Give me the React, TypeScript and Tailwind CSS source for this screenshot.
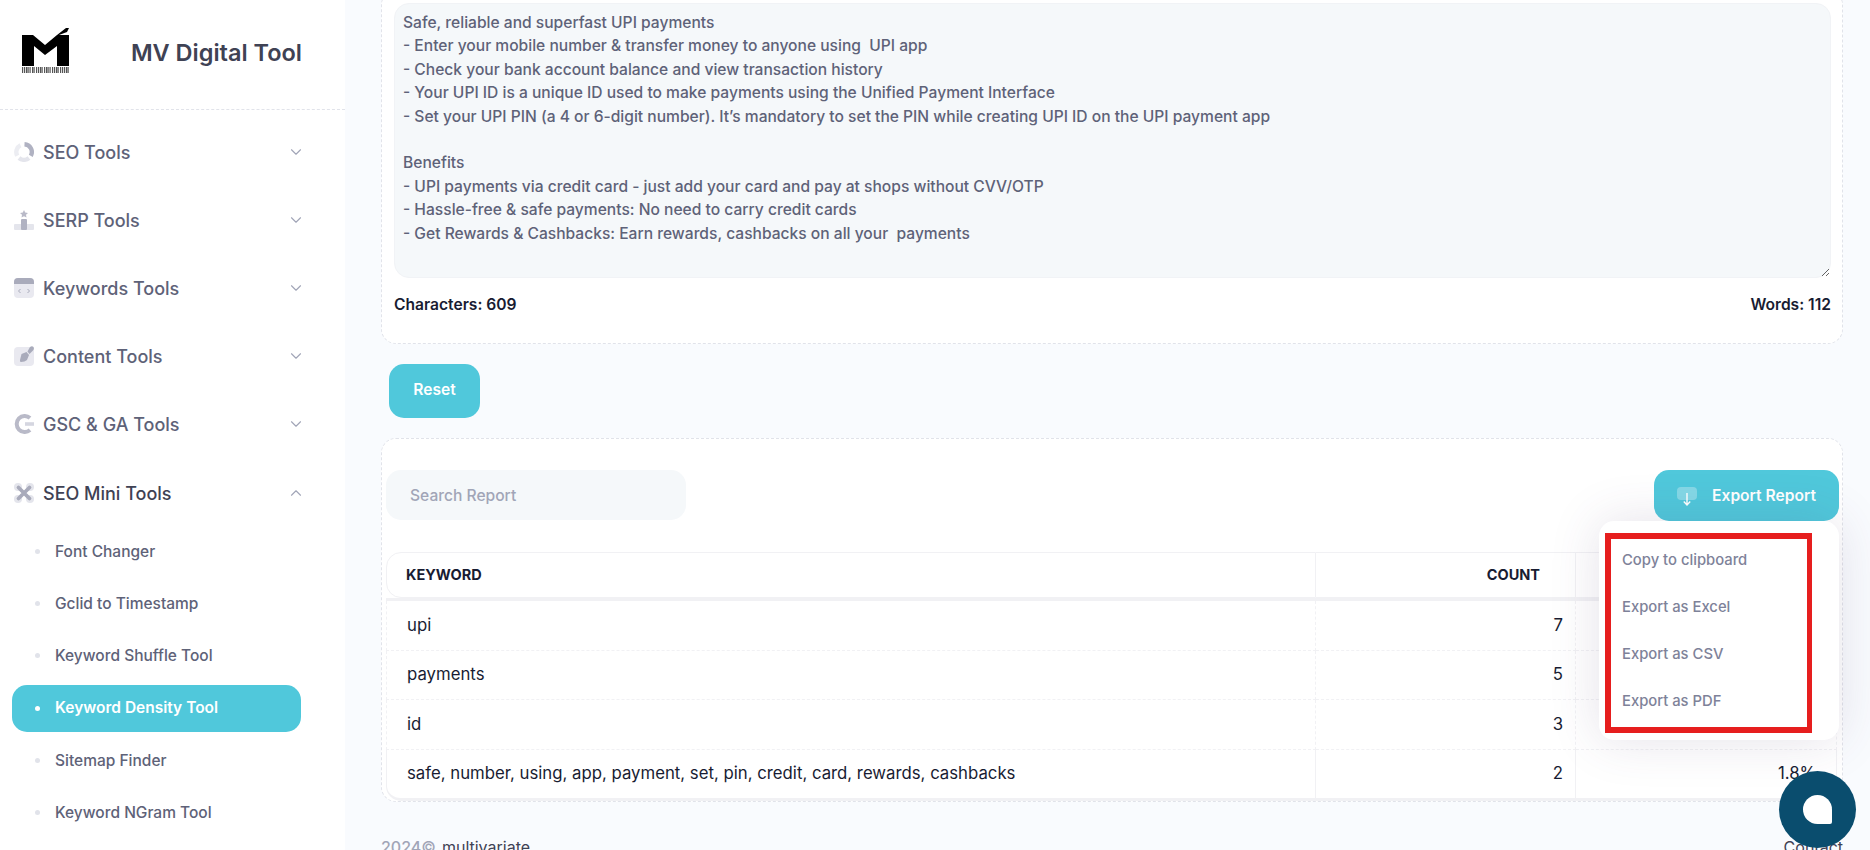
import React from "react";
import { ChevronDown, ChevronUp } from "lucide-react";

const Logo = () => (
  <svg width="60" height="60" viewBox="0 0 60 60" className="shrink-0">
    <path d="M10 10 H21 L33 20 L45 10 L54 3 H57 L55 7 L47 10 H57 V41 H45 V21 L33 30 L22 21 V41 H10 Z" fill="#000" />
    <g fill="#555">
      {[10,12,14,15.5,17.5,20,21.5,24,26,28,29.5,32,34,35.5,37.5,40,42,44,45.5,48,50,52,54,55.5].map((x) => (
        <rect key={x} x={x} y="42" width="1.2" height="6" />
      ))}
    </g>
  </svg>
);

const IconSeo = () => (
  <svg width="20" height="20" viewBox="0 0 20 20" fill="none" className="shrink-0">
    <path d="M6.5 3.2 A7.7 7.7 0 0 0 3.3 13.8" stroke="#ecedf2" strokeWidth="4.4" />
    <path d="M5 16 A7.7 7.7 0 0 0 15 16" stroke="#e4e5ec" strokeWidth="4.4" />
    <path d="M10.5 2.3 A7.7 7.7 0 0 1 16.8 13.8" stroke="#b0b2c2" strokeWidth="4.4" />
  </svg>
);
const IconSerp = () => (
  <svg width="20" height="20" viewBox="0 0 20 20" className="shrink-0">
    <path d="M10 0 L11.2 2.5 L14 2.9 L12 4.8 L12.5 7.5 L10 6.2 L7.5 7.5 L8 4.8 L6 2.9 L8.8 2.5 Z" fill="#b9bac8" />
    <rect x="0" y="14" width="20" height="6" rx="1" fill="#e4e5ec" />
    <rect x="7" y="9" width="6" height="11" rx="1" fill="#b0b2c2" />
  </svg>
);
const IconKeywords = () => (
  <svg width="20" height="20" viewBox="0 0 20 20" fill="none" className="shrink-0">
    <rect width="20" height="20" rx="4" fill="#e9e9f0" />
    <path d="M0 6 V4 A4 4 0 0 1 4 0 H16 A4 4 0 0 1 20 4 V6 Z" fill="#a9abbb" />
    <path d="M6.5 11 L4.5 13 L6.5 15 M13.5 11 L15.5 13 L13.5 15" stroke="#a9abbb" strokeWidth="1" />
  </svg>
);
const IconContent = () => (
  <svg width="20" height="20" viewBox="0 0 20 20" className="shrink-0">
    <rect y="1" width="20" height="19" rx="4" fill="#e9e9f0" />
    <path d="M7.5 8 L12.5 6 L15 9 L13 14 Q11 16 7 16 Q5.5 16 6 14 Z" fill="#a9abbb" />
    <path d="M13.5 5.5 L16 1 Q18 -0.5 19.5 1 Q20.5 3 19 4.5 L15.5 8 Z" fill="#a9abbb" />
  </svg>
);
const IconG = () => (
  <svg width="20" height="20" viewBox="0 0 20 20" fill="none" className="shrink-0">
    <path d="M16 4 A8 8 0 1 0 16 16" stroke="#b9bac8" strokeWidth="4" />
    <path d="M11 10 H20" stroke="#d5d6e0" strokeWidth="3.6" />
  </svg>
);
const IconMini = () => (
  <svg width="20" height="20" viewBox="0 0 20 20" fill="none" className="shrink-0">
    <g fill="#e4e5ec">
      <circle cx="4" cy="4" r="4" />
      <circle cx="16" cy="4" r="4" />
      <circle cx="4" cy="16" r="4" />
      <circle cx="16" cy="16" r="4" />
    </g>
    <path d="M4.5 4.5 L15.5 15.5 M15.5 4.5 L4.5 15.5" stroke="#a9abbb" strokeWidth="3.8" strokeLinecap="round" />
  </svg>
);

const groups = [
  { label: "SEO Tools", icon: <IconSeo /> },
  { label: "SERP Tools", icon: <IconSerp /> },
  { label: "Keywords Tools", icon: <IconKeywords /> },
  { label: "Content Tools", icon: <IconContent /> },
  { label: "GSC & GA Tools", icon: <IconG /> },
];
const subs = ["Font Changer", "Gclid to Timestamp", "Keyword Shuffle Tool", "Keyword Density Tool", "Sitemap Finder", "Keyword NGram Tool"];

const lines = `Safe, reliable and superfast UPI payments
- Enter your mobile number & transfer money to anyone using  UPI app
- Check your bank account balance and view transaction history
- Your UPI ID is a unique ID used to make payments using the Unified Payment Interface
- Set your UPI PIN (a 4 or 6-digit number). It’s mandatory to set the PIN while creating UPI ID on the UPI payment app

Benefits
- UPI payments via credit card - just add your card and pay at shops without CVV/OTP
- Hassle-free & safe payments: No need to carry credit cards
- Get Rewards & Cashbacks: Earn rewards, cashbacks on all your  payments`;

const rows = [
  ["upi", "7", "6.3%"],
  ["payments", "5", "4.5%"],
  ["id", "3", "2.7%"],
  ["safe, number, using, app, payment, set, pin, credit, card, rewards, cashbacks", "2", "1.8%"],
];

export default function App() {
  return (
    <div className="relative flex h-[850px] overflow-hidden bg-[#f9fbfe] font-['Inter',sans-serif]">
      <aside className="w-[345px] shrink-0 bg-white">
        <div className="flex h-[110px] items-center border-b border-dashed border-[#e1e3ea] pl-[12px] pr-[43px]">
          <Logo />
          <span className="mb-[4px] ml-auto text-[23.5px] font-semibold text-[#3f4254]">MV Digital Tool</span>
        </div>
        <nav className="flex flex-col pt-[8px]">
          {groups.map((g) => (
            <div key={g.label} className="flex h-[68px] items-center pl-[14px] pr-[40px]">
              {g.icon}
              <span className="ml-[9px] text-[18px] font-medium text-[#5e6278]">{g.label}</span>
              <ChevronDown strokeWidth={1.5} className="ml-auto size-[18px] text-[#a1a5b7]" />
            </div>
          ))}
          <div className="mt-[1px] flex h-[68px] items-center pl-[14px] pr-[40px]">
            <IconMini />
            <span className="ml-[9px] text-[18px] font-medium text-[#3f4254]">SEO Mini Tools</span>
            <ChevronUp strokeWidth={1.5} className="ml-auto size-[18px] text-[#a1a5b7]" />
          </div>
          <div className="flex flex-col gap-[5.2px] pl-[12px] pr-[44px] pt-[1px]">
            {subs.map((s, i) => {
              const active = i === 3;
              return (
                <div
                  key={s}
                  className={
                    active
                      ? "flex h-[47px] items-center rounded-[15px] bg-[#50c8db] pl-[23px] text-[15.5px] font-semibold text-white"
                      : "flex h-[47px] items-center pl-[23px] text-[15.5px] font-medium text-[#5e6278]"
                  }
                >
                  <span className={active ? "mr-[15px] size-[5px] rounded-full bg-white" : "mr-[15px] size-[5px] rounded-full bg-[#e1e3ea]"} />
                  {s}
                </div>
              );
            })}
          </div>
        </nav>
      </aside>

      <main className="flex min-w-0 flex-1 flex-col pl-[36px] pr-[27px]">
        <section className="-mt-[10px] rounded-[15px] border border-dashed border-[#e1e3ea] bg-white pb-[26px] pl-[12px] pr-[11px] pt-[12px]">
          <textarea
            readOnly
            value={lines}
            className="block h-[275px] w-full resize rounded-[15px] border border-[#f1f3f6] bg-[#f5f8fa] px-[8px] py-[7px] text-[15.6px] leading-[23.4px] font-medium text-[#5e6278] outline-none"
          />
          <div className="mt-[15px] flex justify-between text-[15.6px] leading-[24px] font-semibold text-[#181c32]">
            <span>Characters: 609</span>
            <span>Words: 112</span>
          </div>
        </section>

        <button className="ml-[8px] mt-[20px] h-[54px] w-[91px] shrink-0 rounded-[15px] bg-[#50c8db] pb-[2px] text-[15.6px] font-semibold text-white">
          Reset
        </button>

        <section className="mt-[20px] h-[364px] shrink-0 rounded-[15px] border border-dashed border-[#e1e3ea] bg-white pl-[4px] pr-[3px] pt-[31px]">
          <div className="flex items-start justify-between">
            <input
              readOnly
              placeholder="Search Report"
              className="h-[50px] w-[300px] rounded-[15px] bg-[#f5f8fa] pl-[24px] text-[15.6px] font-medium text-[#5e6278] outline-none placeholder:text-[#a1a5b7]"
            />
            <div className="relative z-10">
              <button className="flex h-[51px] w-[185px] items-center justify-center gap-[15px] rounded-[15px] bg-[#50c8db] text-[15.6px] font-semibold text-white">
                <svg width="20" height="20" viewBox="0 0 20 20" fill="none" className="shrink-0">
                  <rect y="1" width="20" height="13" rx="4" fill="#fff" fillOpacity="0.3" />
                  <path d="M10 7 V19 M6.8 15.5 L10 19 L13.2 15.5" stroke="#fff" strokeWidth="1.4" />
                </svg>
                Export Report
              </button>
              <div className="absolute right-0 top-full h-[219px] w-[240px] rounded-[15px] bg-white pb-[7px] pl-[6px] pr-[27px] pt-[12px] shadow-[0_0_50px_0_rgba(82,63,105,0.15)]">
                <div className="h-full border-[6px] border-r-[5px] border-[#e61e1e]">
                  {["Copy to clipboard", "Export as Excel", "Export as CSV", "Export as PDF"].map((m) => (
                    <div key={m} className="flex h-[47px] items-center pb-[5px] pl-[11px] text-[14.8px] font-medium text-[#7e8299]">
                      {m}
                    </div>
                  ))}
                </div>
              </div>
            </div>
          </div>

          <table className="mt-[31px] w-[1451px] table-fixed border-separate border-spacing-0 text-[#181c32]">
            <colgroup>
              <col className="w-[930px]" />
              <col className="w-[260px]" />
              <col />
            </colgroup>
            <thead>
              <tr className="h-[46px] text-[14.5px] font-semibold">
                <th className="rounded-tl-[15px] rounded-bl-[15px] border-y border-l border-r border-[#f1f1f4] pl-[19px] text-left">KEYWORD</th>
                <th className="border-y border-r border-[#f1f1f4] pr-[35px] text-right">COUNT</th>
                <th className="rounded-tr-[15px] border-y border-r border-[#f1f1f4] pr-[20px] text-right">DENSITY</th>
              </tr>
              <tr>
                <th colSpan={3} className="h-[3px] bg-[#f1f1f4] p-0" />
              </tr>
            </thead>
            <tbody className="text-[16.75px]">
              {rows.map(([k, c, d], i) => {
                const last = i === rows.length - 1;
                return (
                  <tr key={k} className={last ? "h-[51px]" : "h-[49.5px]"}>
                    <td className={(last ? "rounded-bl-[15px] border-b-[3px] border-solid border-[#f1f1f4] " : "border-b border-dashed border-[#f1f1f4] ") + "border-x border-x-[#f1f1f4] pl-[20px]"}>{k}</td>
                    <td className={(last ? "border-b-[3px] border-solid border-[#f1f1f4] " : "border-b border-dashed border-[#f1f1f4] ") + "border-r border-r-[#f1f1f4] pr-[12px] text-right"}>{c}</td>
                    <td className={(last ? "rounded-br-[15px] border-b-[3px] border-solid border-[#f1f1f4] " : "border-b border-dashed border-[#f1f1f4] ") + "border-r border-r-[#f1f1f4] pr-[20px] text-right"}>{d}</td>
                  </tr>
                );
              })}
            </tbody>
          </table>
        </section>

        <footer className="mt-[33px] flex shrink-0 justify-between text-[16px] leading-[24px]">
          <span>
            <span className="font-medium text-[#a1a5b7]">2024©</span>
            <span className="ml-[6px] text-[#3f4254]">multivariate</span>
          </span>
          <span className="text-[#3f4254]">Contact</span>
        </footer>
      </main>

      <button className="absolute left-[1779px] top-[771px] z-20 flex size-[77px] items-center justify-center rounded-full bg-[#0a4d6e]">
        <span className="size-[29px] rounded-[50%_50%_2px_50%] bg-white" />
      </button>
    </div>
  );
}
